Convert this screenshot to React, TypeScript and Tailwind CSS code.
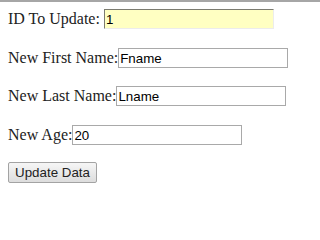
import React from "react";

const serif = { fontFamily: '"Liberation Serif", "Times New Roman", serif' };
const sans = { fontFamily: '"Liberation Sans", Arial, sans-serif' };

export default function App() {
  const inputCls =
    "h-[20px] w-[170px] border border-[#a9a9a9] bg-white px-[1px] text-[13.33px] text-black outline-none";
  return (
    <div className="w-[320px] h-[230px] bg-white border-t-[2px] border-[#a6a6a6] overflow-hidden" style={serif}>
      <div className="flex flex-col pl-[8px] pt-[7px] text-[16px] text-[#222]">
        <div className="flex items-center h-[20px]">
          <span className="whitespace-pre leading-[20px]">ID To Update: </span>
          <input
            readOnly
            value="1"
            className="h-[20px] w-[170px] border border-t-[#7b7b70] border-l-[#7b7b70] border-r-[#ececec] border-b-[#ececec] bg-[#ffffc2] px-[1px] text-[13.33px] text-black outline-none"
            style={sans}
          />
        </div>
        <div className="flex items-center h-[20px] mt-[19px]">
          <span className="leading-[20px]">New First Name:</span>
          <input readOnly value="Fname" className={inputCls} style={sans} />
        </div>
        <div className="flex items-center h-[20px] mt-[18px]">
          <span className="leading-[20px]">New Last Name:</span>
          <input readOnly value="Lname" className={inputCls} style={sans} />
        </div>
        <div className="flex items-center h-[20px] mt-[19px]">
          <span className="leading-[20px]">New Age:</span>
          <input readOnly value="20" className={inputCls} style={sans} />
        </div>
        <div className="flex mt-[17px]">
          <button
            className="h-[21px] w-[89px] rounded-[2px] border border-[#a3a3a3] bg-gradient-to-b from-[#f6f6f6] to-[#dddddd] text-[13.33px] text-[#222] leading-none"
            style={sans}
          >
            Update Data
          </button>
        </div>
      </div>
    </div>
  );
}
